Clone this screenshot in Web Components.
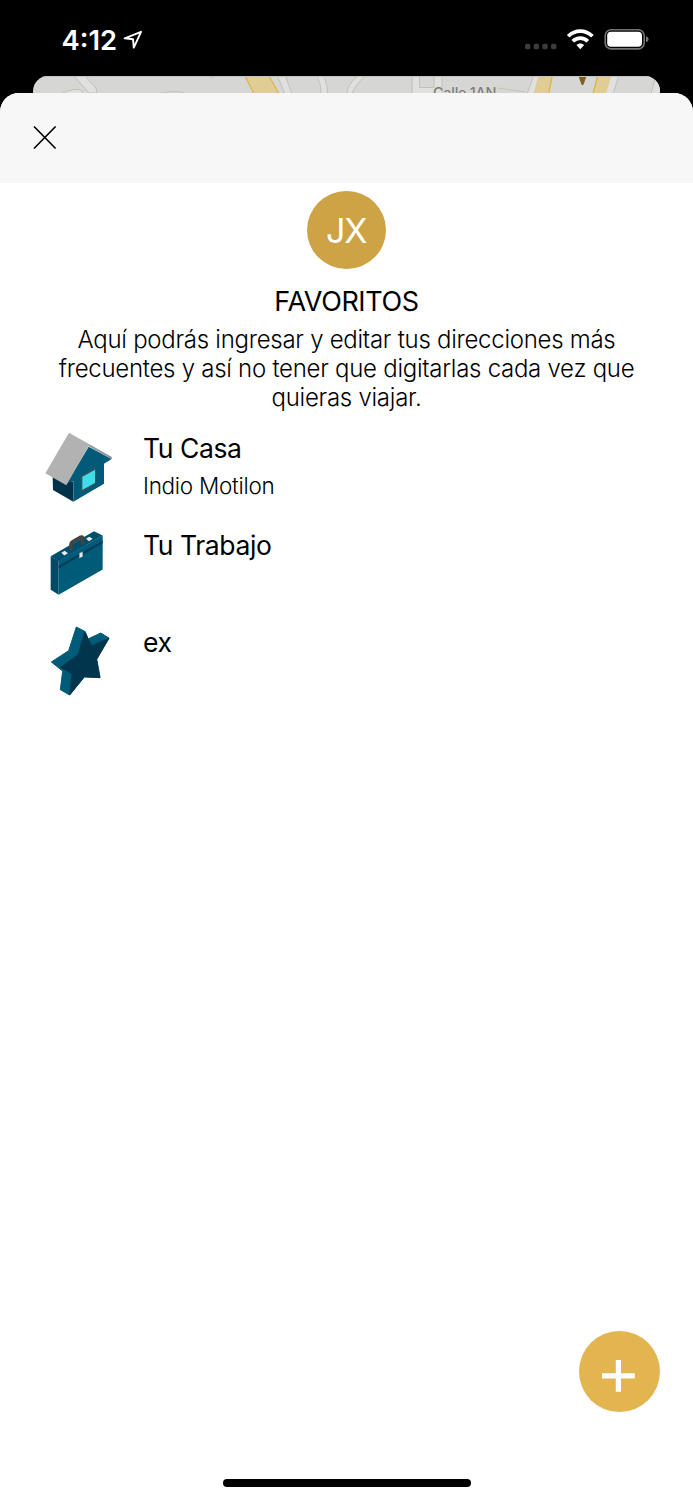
<!DOCTYPE html>
<html lang="es">
<head>
<meta charset="utf-8">
<title>Favoritos</title>
<style>
html, body{
    margin: 0;
    height: 100%;
    background: #000;
    font-family: Inter, "Liberation Sans", sans-serif;
    color: #000;
}
</style>
</head>
<body>
<favorites-screen></favorites-screen>

<template id="status-bar">
<style>
:host{
    display: flex;
    box-sizing: border-box;
    height: 76px;
    padding: 0 44px 0 61.5px;
    align-items: center;
    color: #fff;
}
.time{
    font-size: 27.3px;
    font-weight: 600;
    line-height: 32px;
    margin-top: 5px;
    width: 61.5px;
}
svg{
    display: block;
}
.status{
    margin-left: auto;
}
</style>
<span class="time"><slot></slot></span>
<svg width="20" height="76" viewBox="123 0 20 76"><path d="M124.7 38.3L141 31.8L133.8 47.6L133 39.2Z" fill="none" stroke="#fff" stroke-width="1.9" stroke-linejoin="round"/></svg>
<svg class="status" width="127" height="76" viewBox="522 0 127 76">
  <g fill="#3c3c3e">
    <rect x="525" y="43.8" width="5.4" height="5.4" rx="1.7"/>
    <rect x="533.7" y="43.8" width="5.4" height="5.4" rx="1.7"/>
    <rect x="542.3" y="43.8" width="5.4" height="5.4" rx="1.7"/>
    <rect x="551" y="43.8" width="5.4" height="5.4" rx="1.7"/>
  </g>
  <g fill="none" stroke="#fff" stroke-width="3.7">
    <path d="M568.2 36.2C575 29.3 585.6 29.3 592.4 36.2"/>
    <path d="M572.8 41.2C577 37 583.6 37 587.8 41.2"/>
  </g>
  <path d="M576.4 45C578.6 42.9 582 42.9 584.2 45L580.3 49.2Z" fill="#fff"/>
  <rect x="605.2" y="29.7" width="39" height="19.2" rx="6" fill="none" stroke="#737375" stroke-width="1.6"/>
  <rect x="607.2" y="31.8" width="34.8" height="15" rx="3.8" fill="#fff"/>
  <path d="M646 36.3Q648.6 37 648.6 39.3Q648.6 41.6 646 42.3Z" fill="#737375"/>
</svg>
</template>

<template id="map-peek">
<style>
:host{
    display: block;
    height: 17px;
    margin: 0 33px;
    border-radius: 15px 15px 0 0;
    overflow: hidden;
    background: #d6d6d4;
}
svg{
    display: block;
}
</style>
<svg width="627" height="17" viewBox="33 76 627 17">
  <g fill="#e0e0df" stroke="#c0c0b8" stroke-width="1">
    <path d="M73 75L89 93H97L96 88L84 75Z"/>
    <path d="M60 94C67 91 74 89 79 89.5Q82 90 83 94"/>
    <path d="M277 75L285 94H292L285 75Z"/>
    <path d="M316 75C320 81 321 87 321 94H327.5C327.5 87 326 80 323 75Z"/>
    <path d="M359 75Q347 84 347 94H352Q354 86 366 75Z"/>
    <path d="M412 75V94H442V75Z"/>
    <path d="M419.5 75V87.5H434V75Z" fill="#d6d6d4"/>
    <path d="M534 75L527 94H534L540 75Z"/>
    <path d="M610 75L605 94H613L619 75Z"/>
    <path d="M656 75L651 94H663V75Z"/>
  </g>
  <path d="M157 94Q175 89 187 94M498 88L525 92M210 76Q213 79 217 75" fill="none" stroke="#c3c3ba"/>
  <g fill="#e0cd96">
    <path d="M244.5 75L254 93.5H279L268.5 75Z"/>
    <path d="M538.5 75L533.5 94H549L553 75Z"/>
    <path d="M598 75L592.5 94H606L611.5 75Z"/>
  </g>
  <path d="M244.5 75L254 94M268.5 75L279 94M552.5 75L548.5 94M598 75L592.8 94" fill="none" stroke="#dfb047" stroke-width="1.2"/>
  <path d="M578 75H587L583.5 84.5Q582.5 86 581.5 84.5Z" fill="#80611d"/>
  <text x="433" y="97.5" font-size="14.5" font-weight="500" fill="#7c7c76" stroke="#dcdcda" stroke-width="1.5" paint-order="stroke" textLength="63.5">Calle 1AN</text>
  <path d="M33 76.5H660" stroke="#c4c4c3" stroke-width="1"/>
</svg>
</template>

<template id="sheet-header">
<style>
:host{
    display: flex;
    align-items: center;
    height: 90px;
    padding-left: 33px;
    background: #f7f7f7;
}
svg{
    display: block;
}
</style>
<svg width="24" height="24" viewBox="0 0.5 24 24"><path d="M1 1L22.6 23M22.6 1L1 23" stroke="#000" stroke-width="1.6"/></svg>
</template>

<template id="profile-intro">
<style>
:host{
    display: flex;
    flex-direction: column;
    align-items: center;
    text-align: center;
}
.avatar{
    width: 78.5px;
    height: 78px;
    margin-right: 0.5px;
    border-radius: 50%;
    background: #cea346;
    color: #fff;
    font-size: 34px;
    font-weight: 400;
    line-height: 79px;
    letter-spacing: -1px;
}
h1{
    margin: 16px 0 0;
    font-size: 27px;
    font-weight: 400;
    line-height: 34px;
    letter-spacing: -0.4px;
}
p{
    margin: 6px 0 0;
    font-size: 24px;
    font-weight: 300;
    line-height: 29px;
    letter-spacing: -0.27px;
    color: #000;
    white-space: nowrap;
}
::slotted(span){
    display: block;
}
</style>
<div class="avatar"></div>
<h1></h1>
<p><slot></slot></p>
</template>

<template id="favorite-item">
<style>
:host{
    display: grid;
    grid-template-columns: 100px 1fr;
    column-gap: 13px;
    height: 97.3px;
    padding-left: 30px;
}
.text{
    padding-top: 10.6px;
}
.name{
    font-size: 26.5px;
    line-height: 34px;
    letter-spacing: -0.4px;
}
.address{
    margin-top: 6px;
    font-size: 22.5px;
    font-weight: 300;
    line-height: 30px;
    letter-spacing: -0.27px;
    color: #000;
}
::slotted(svg){
    display: block;
}
</style>
<slot name="icon"></slot>
<div class="text">
  <div class="name"></div>
  <div class="address"></div>
</div>
</template>

<template id="add-button">
<style>
:host{
    display: block;
    width: 81px;
    height: 81px;
    border-radius: 50%;
    background: #e2b550;
}
svg{
    display: block;
}
</style>
<svg width="81" height="81" viewBox="0 0 81 81"><path d="M23 44.8H55.8M39.4 29V60.8" stroke="#fff" stroke-width="5.2"/></svg>
</template>

<template id="favorites-screen">
<style>
:host{
    display: flex;
    flex-direction: column;
    width: 693px;
    height: 1500px;
    overflow: hidden;
}
main{
    display: flex;
    flex-direction: column;
    flex: 1;
    border-radius: 19px 19px 0 0;
    overflow: hidden;
    background: #fff;
}
sheet-header, profile-intro{
    flex: none;
}
profile-intro{
    box-sizing: border-box;
    height: 237px;
    padding-top: 8px;
}
footer{
    display: flex;
    flex-direction: column;
    margin-top: auto;
}
add-button{
    align-self: flex-end;
    margin-right: 32.6px;
}
.home{
    align-self: center;
    width: 248px;
    height: 8px;
    margin: 67px 0 13px;
    border-radius: 4px;
    background: #000;
}
</style>
<status-bar>4:12</status-bar>
<map-peek></map-peek>
<main>
  <sheet-header></sheet-header>
  <profile-intro data-initials="JX" data-title="FAVORITOS">
    <span>Aquí podrás ingresar y editar tus direcciones más</span>
    <span>frecuentes y así no tener que digitarlas cada vez que</span>
    <span>quieras viajar.</span>
  </profile-intro>
  <favorite-item data-name="Tu Casa" data-address="Indio Motilon">
    <svg slot="icon" width="100" height="97.5" viewBox="0 0 300 292.5">
      <path d="M68 171L130 185V245L69 210Z" fill="#003349"/>
      <path d="M110 190L176 80L245 117L222 131V191L130 245V184Z" fill="#005a78"/>
      <path d="M117 38L245 110L245 117L176 78L109 196L46 160Z" fill="#b2b2b2"/>
      <path d="M176 78L245 117V112L178 74Z" fill="#8c979b"/>
      <path d="M155 169L197 146V190L155 213Z" fill="#3cdfe9" stroke="#3c4f55" stroke-width="4"/>
    </svg>
  </favorite-item>
  <favorite-item data-name="Tu Trabajo">
    <svg slot="icon" width="100" height="97.5" viewBox="0 -7.5 300 292.5">
      <path d="M62 110L86 124V226L62 211Z" fill="#004a67"/>
      <path d="M62 110L192 35L218 48L86 125Z" fill="#00506d"/>
      <path d="M86 124L218 48V150L86 226Z" fill="#005b78"/>
      <path d="M86 139L218 64V71L86 147Z" fill="#003e59"/>
      <path d="M123 93V75Q123 70 128 67L150 54Q158 50 158 57V74" fill="none" stroke="#414346" stroke-width="11"/>
      <path d="M94 100L104 94L114 101L103 108ZM168 58L178 52L188 58L177 65Z" fill="#e5edf0"/>
      <path d="M148 101L158 97V111L148 116Z" fill="#e5edf0" stroke="#71868e" stroke-width="1"/>
    </svg>
  </favorite-item>
  <favorite-item data-name="ex">
    <svg slot="icon" width="100" height="97.5" viewBox="0 -1 300 292.5">
      <path d="M139 35L166 49L174 71L212 53L237 68L200 132L210 187L163 185L119 239L91 223L98 167L64 140L116 106Z" fill="#005b79" stroke="#005b79" stroke-width="3" stroke-linejoin="round"/>
      <path d="M164 49L185 91L237 69L200 132L210 187L163 184L119 239L126 175L91 156L144 118Z" fill="#00354d" stroke="#00354d" stroke-width="2" stroke-linejoin="round"/>
    </svg>
  </favorite-item>
  <footer>
    <add-button></add-button>
    <div class="home"></div>
  </footer>
</main>
</template>

<script>
class BaseElement extends HTMLElement{
    constructor(){
        super();
        // each template shares its id with the tag name
        const template = document.getElementById(this.localName);
        this.attachShadow({mode: "open"});
        this.shadowRoot.appendChild(template.content.cloneNode(true));
    }
}

class StatusBar extends BaseElement{}
class MapPeek extends BaseElement{}
class SheetHeader extends BaseElement{}
class AddButton extends BaseElement{}
class FavoritesScreen extends BaseElement{}

class ProfileIntro extends BaseElement{
    connectedCallback(){
        this.shadowRoot.querySelector(".avatar").textContent = this.dataset.initials || "";
        this.shadowRoot.querySelector("h1").textContent = this.dataset.title || "";
    }
}

class FavoriteItem extends BaseElement{
    connectedCallback(){
        this.shadowRoot.querySelector(".name").textContent = this.dataset.name || "";
        this.shadowRoot.querySelector(".address").textContent = this.dataset.address || "";
    }
}

customElements.define('status-bar', StatusBar);
customElements.define('map-peek', MapPeek);
customElements.define('sheet-header', SheetHeader);
customElements.define('profile-intro', ProfileIntro);
customElements.define('favorite-item', FavoriteItem);
customElements.define('add-button', AddButton);
customElements.define('favorites-screen', FavoritesScreen);
</script>
</body>
</html>
